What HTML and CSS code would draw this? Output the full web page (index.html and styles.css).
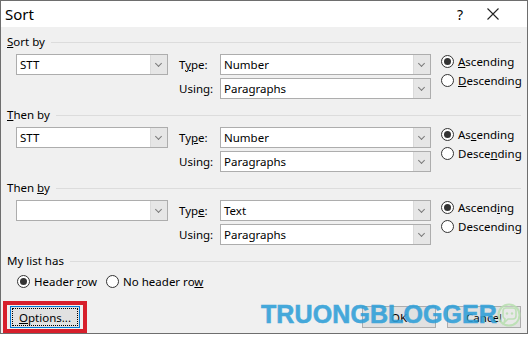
FILE: index.html
```html
<!DOCTYPE html>
<html lang="en">
<head>
    <meta charset="UTF-8">
    <title>Sort</title>
    <link rel="stylesheet" href="styles.css">
</head>
<body>

    <div class="dialog">
        <!-- Title bar -->
        <div class="titlebar">
            <span class="title">Sort</span>
            <span class="help">?</span>
            <span class="close">
                <svg width="12" height="12" viewBox="0 0 12 12"><path d="M0.5 0.5 L11.5 11.5 M11.5 0.5 L0.5 11.5" stroke="#222" stroke-width="1.1" fill="none"/></svg>
            </span>
        </div>

        <div class="body">
            <!-- Sort by -->
            <div class="group">
                <div class="group-head"><span><u>S</u>ort by</span></div>
                <div class="group-rows">
                    <div class="combo key"><span>STT</span><i class="drop"></i></div>
                    <span class="field-label">T<u>y</u>pe:</span>
                    <div class="combo"><span>Number</span><i class="drop"></i></div>
                    <div class="order">
                        <div class="radio checked"><i></i><span><u>A</u>scending</span></div>
                        <div class="radio"><i></i><span><u>D</u>escending</span></div>
                    </div>
                    <span class="field-label row2">Using:</span>
                    <div class="combo row2"><span>Paragraphs</span><i class="drop"></i></div>
                </div>
            </div>

            <!-- Then by -->
            <div class="group">
                <div class="group-head"><span><u>T</u>hen by</span></div>
                <div class="group-rows">
                    <div class="combo key"><span>STT</span><i class="drop"></i></div>
                    <span class="field-label">Ty<u>p</u>e:</span>
                    <div class="combo"><span>Number</span><i class="drop"></i></div>
                    <div class="order">
                        <div class="radio checked"><i></i><span>As<u>c</u>ending</span></div>
                        <div class="radio"><i></i><span>Desce<u>n</u>ding</span></div>
                    </div>
                    <span class="field-label row2">Using:</span>
                    <div class="combo row2"><span>Paragraphs</span><i class="drop"></i></div>
                </div>
            </div>

            <!-- Then by -->
            <div class="group">
                <div class="group-head"><span>Then <u>b</u>y</span></div>
                <div class="group-rows">
                    <div class="combo key"><span></span><i class="drop"></i></div>
                    <span class="field-label">Typ<u>e</u>:</span>
                    <div class="combo"><span>Text</span><i class="drop"></i></div>
                    <div class="order">
                        <div class="radio checked"><i></i><span>Ascend<u>i</u>ng</span></div>
                        <div class="radio"><i></i><span>Descendin<u>g</u></span></div>
                    </div>
                    <span class="field-label row2">Using:</span>
                    <div class="combo row2"><span>Paragraphs</span><i class="drop"></i></div>
                </div>
            </div>

            <!-- My list has -->
            <div class="group-head"><span>My list has</span></div>
            <div class="header-opts">
                <div class="radio checked"><i></i><span>Header <u>r</u>ow</span></div>
                <div class="radio"><i></i><span>No header ro<u>w</u></span></div>
            </div>

            <!-- Buttons -->
            <div class="footer">
                <div class="marker">
                    <button class="btn focused"><span><u>O</u>ptions...</span></button>
                </div>
                <div class="actions">
                    <button class="btn">OK</button>
                    <button class="btn">Cancel</button>
                </div>
            </div>
        </div>

        <!-- Watermark -->
        <div class="watermark">
            <span>TRUONGBLOGGER</span>
            <svg width="24" height="26" viewBox="0 0 24 26">
                <circle cx="12" cy="13" r="10.5" stroke="#b9e0b1" stroke-width="2" fill="rgba(255,255,255,0.3)"/>
                <path d="M6 9 Q6 6 9 6 L16 6 Q19 6 19 9 L19 14 Q19 17 16 17 L11 17 L7 21 L8 17 Q6 16 6 14 Z" stroke="#b9e0b1" stroke-width="1.6" fill="none"/>
                <circle cx="10" cy="11.5" r="1.2" fill="#b9e0b1"/>
                <circle cx="15" cy="11.5" r="1.2" fill="#b9e0b1"/>
            </svg>
        </div>
    </div>

</body>
</html>
```

FILE: styles.css
```css
/* General Styles */
body, html {
    margin: 0;
    padding: 0;
    background-color: #ffffff;
    font-family: "Noto Sans", sans-serif;
    font-size: 11.5px;
    color: #000;
}

.dialog {
    position: relative;
    width: 528px;
    height: 334px;
    box-sizing: border-box;
    border: 1px solid #6e6e6e;
    background-color: #f0f0f0;
    overflow: hidden;
}

/* Title bar */
.titlebar {
    display: flex;
    align-items: center;
    height: 26px;
    background-color: #ffffff;
    padding-left: 4px;
}

.title {
    font-size: 15px;
    flex: 1;
}

.help {
    font-size: 14px;
    width: 12px;
    margin-right: 18px;
}

.close {
    display: flex;
    margin-right: 28px;
}

/* Body */
.body {
    padding: 8px 6px 0 6px;
}

.group {
    margin-bottom: 9px;
}

.group-head {
    display: flex;
    align-items: center;
    gap: 6px;
    height: 14px;
    line-height: 14px;
}

.group-head::after {
    content: "";
    flex: 1;
    border-top: 1px solid #dcdcdc;
}

.group-rows {
    display: grid;
    grid-template-columns: 152px 52px 211px 1fr;
    grid-template-rows: 21px 21px;
    row-gap: 3px;
    margin: 5px 0 0 9px;
}

.field-label {
    padding-left: 11px;
    line-height: 21px;
}

.row2 {
    grid-row: 2;
}

.field-label.row2 {
    grid-column: 2;
}

.combo.row2 {
    grid-column: 3;
}

.combo {
    display: flex;
    box-sizing: border-box;
    border: 1px solid #adadad;
    background-color: #ffffff;
    line-height: 19px;
}

.combo span {
    flex: 1;
    padding-left: 3px;
}

.combo .drop {
    width: 16px;
    border-left: 1px solid #dadada;
    background-color: #e6e6e6;
    position: relative;
}

.combo .drop::after {
    content: "";
    position: absolute;
    left: 5px;
    top: 6px;
    width: 4px;
    height: 4px;
    border-right: 1px solid #7a7a7a;
    border-bottom: 1px solid #7a7a7a;
    transform: rotate(45deg);
}

.order {
    grid-row: 1 / 3;
    grid-column: 4;
    padding-left: 10px;
    margin-top: -2px;
}

/* Radio buttons */
.radio {
    display: flex;
    align-items: center;
    gap: 4px;
    height: 19px;
}

.radio i {
    width: 13px;
    height: 13px;
    box-sizing: border-box;
    border: 1px solid #333;
    border-radius: 50%;
    background-color: #fff;
    position: relative;
}

.radio.checked i::after {
    content: "";
    position: absolute;
    left: 2px;
    top: 2px;
    width: 7px;
    height: 7px;
    border-radius: 50%;
    background-color: #333;
}

.header-opts {
    display: flex;
    gap: 9px;
    margin-top: 4px;
    padding-left: 10px;
}

/* Buttons */
.footer {
    display: flex;
    justify-content: space-between;
    align-items: center;
    margin-top: 10px;
}

.marker {
    margin-left: -4px;
    border: 4px solid #d71f2b;
    padding: 1px 3px;
}

.btn {
    display: block;
    height: 22px;
    box-sizing: border-box;
    border: 1px solid #adadad;
    background-color: #e1e1e1;
    font-family: "Noto Sans", sans-serif;
    font-size: 11.5px;
    padding: 0;
    color: #000;
}

.btn.focused {
    width: 70px;
    border: 1px solid #0078d7;
    padding: 1px;
}

.btn.focused span {
    display: block;
    height: 18px;
    line-height: 17px;
    box-sizing: border-box;
    border: 1px dotted #000;
}

.actions {
    display: flex;
    gap: 11px;
}

.actions .btn {
    width: 74px;
}

/* Watermark */
.watermark {
    position: absolute;
    left: 260px;
    top: 299px;
    display: flex;
    align-items: center;
    gap: 0;
    opacity: 0.88;
}

.watermark span {
    font-family: "Liberation Sans", Arial, sans-serif;
    font-weight: bold;
    font-size: 25px;
    letter-spacing: 0.1px;
    color: #2e9fd8;
    -webkit-text-stroke: 0.6px #2e9fd8;
}
```
